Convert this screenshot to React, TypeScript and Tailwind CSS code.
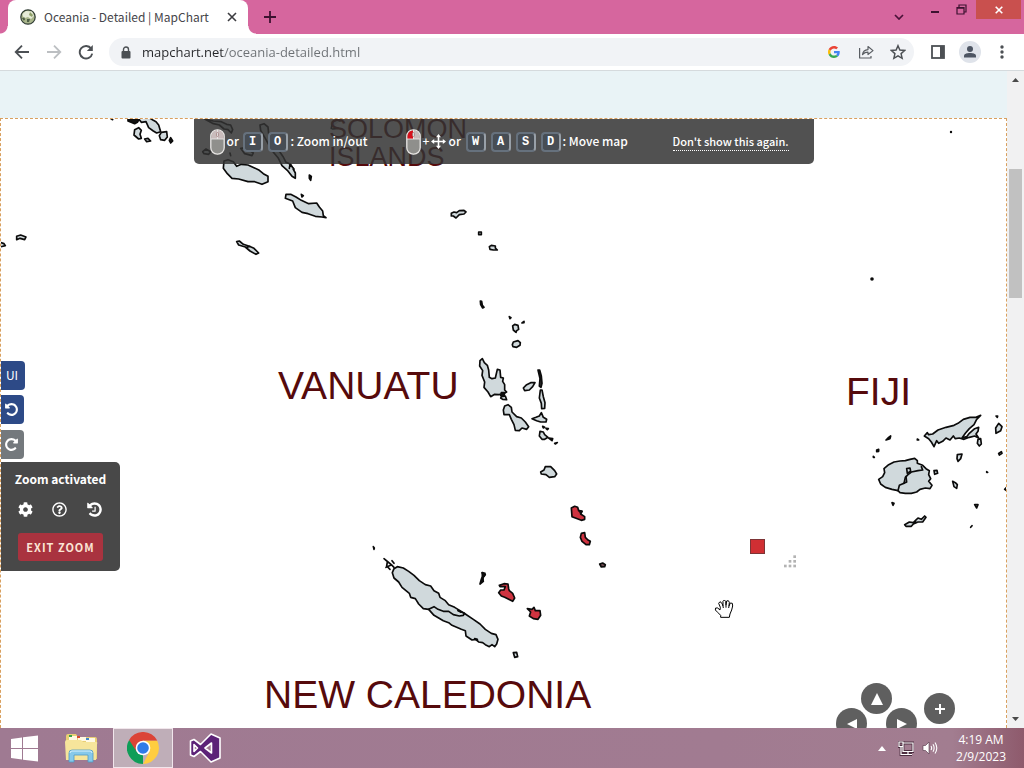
import React from "react";
import { FaCog, FaRegQuestionCircle } from "react-icons/fa";

const LAND = "#d0d9dc";
const RED = "#cf3340";

type Shape = { d: string; fill?: string };

/* Each region lists its outlines on a local grid of three units per map pixel. */
type Region = { x: number; y: number; shapes: Shape[] };

const REGIONS: Region[] = [
  {
    x: 0,
    y: 115,
    shapes: [
      { d: "M384 12 L384 18 L404 26 L412 22 L418 12 L410 10 Z", fill: "#111" },
      { d: "M418 14 L424 22 L438 20 L446 38 L460 48 L470 54 L482 50 L476 30 L468 20 L460 16 L450 10" },
      { d: "M404 44 L416 38 L424 46 L420 58 L424 70 L416 72 L402 60 Z" },
      { d: "M484 52 L500 50 L502 66 L494 76 L482 74 L478 62 Z" },
      { d: "M434 72 L444 70 L452 78 L440 80 Z" },
      { d: "M512 68 L518 78 L512 84 L508 76 Z", fill: "#222" },
      { d: "M328 8 L338 14" },
      { d: "M614 12 L640 18 L664 20 L680 28 L692 30 L698 44 L694 54 L684 44 L672 42 L658 30 L640 26 Z" },
      { d: "M780 30 L792 26 L804 36 L806 56 L818 84 L836 106 L850 126 L858 142 L872 148 L886 174 L886 190 L876 184 L862 166 L846 152 L834 128 L814 104 L798 74 L782 46 Z" },
      { d: "M868 160 L870 148 L882 162" },
      { d: "M608 110 L618 102 L632 110 L626 118 L612 116 Z" },
      { d: "M690 114 L692 122 M722 100 L738 98 L760 114 L756 122 L734 116 Z" },
      { d: "M672 138 L684 134 L700 140 L710 154 L724 148 L744 150 L762 158 L778 166 L790 176 L804 184 L804 200 L786 208 L764 200 L744 200 L716 192 L696 190 L682 176 L670 160 Z" },
      { d: "M928 180 L934 184 L932 196 L928 190 Z", fill: "#111" },
      { d: "M904 238 L910 242 L906 246 Z", fill: "#111" },
      { d: "M858 238 L872 238 L888 246 L904 256 L926 266 L950 264 L958 276 L968 288 L970 302 L978 308 L966 306 L946 304 L924 296 L906 292 L886 278 L878 258 L856 250 Z" },
      { d: "M710 380 L718 378 L730 388 L748 394 L762 400 L776 414 L768 418 L750 408 L736 396 L716 390 Z M738 398 L750 394" },
      { d: "M50 364 L62 360 L78 366 L74 374 L60 370 L50 374 Z" },
      { d: "M0 382 L12 386 L16 392 L0 396" },
      { d: "M994 40 L998 20 L1010 14 L1020 18 M998 42 L1014 40" },
    ],
  },
  {
    x: 440,
    y: 200,
    shapes: [
      { d: "M34 40 L42 36 L50 38 L58 32 L72 31 L78 36 L72 42 L58 44 L48 54 L40 48 L34 48 Z" },
      { d: "M116 96 L124 96 L124 104 L116 104 Z" },
      { d: "M148 140 L154 136 L166 138 L166 144 L172 150 L160 150 L150 148 Z" },
      { d: "M121 303 L125 304 L127 316 L132 322 L128 324 L122 314 Z", fill: "#111" },
      { d: "M208 350 L213 353 L210 356 Z M246 369 L252 364 L252 368 Z", fill: "#111" },
      { d: "M218 378 L224 373 L234 376 L236 388 L230 392 L228 397 L220 390 Z" },
      { d: "M220 426 L234 422 L241 428 L240 436 L230 442 L219 440 L217 434 Z" },
    ],
  },
  {
    x: 440,
    y: 350,
    shapes: [
      { d: "M120 32 L127 26 L133 38 L142 46 L146 60 L148 82 L156 86 L166 84 L172 58 L180 60 L182 82 L190 84 L188 94 L194 104 L194 120 L200 126 L188 132 L176 134 L164 133 L152 140 L144 126 L132 112 L134 96 L126 76 L128 62 L119 48 Z" },
      { d: "M184 128 L194 128 L192 138 L182 136 Z", fill: "#111" },
      { d: "M184 140 L196 138 L200 149 L188 148 L182 144 Z" },
      { d: "M250 114 L260 104 L272 98 L285 98 L278 110 L268 120 L254 122 Z" },
      { d: "M294 60 L299 60 L304 78 L306 100 L303 112 L298 108 L300 86 Z", fill: "#333" },
      { d: "M301 120 L306 120 L310 140 L315 158 L314 175 L305 176 L304 160 L298 144 Z" },
      { d: "M194 168 L204 164 L214 172 L216 186 L230 200 L244 204 L256 216 L266 230 L260 238 L246 234 L238 242 L226 241 L222 224 L214 208 L208 194 L192 194 L190 180 Z" },
      { d: "M276 206 L288 202 L298 198 L304 188 L310 202 L320 208 L318 216 L302 216 L290 212 Z" },
      { d: "M308 229 L314 232 L310 234 Z M318 235 L325 236 L322 239 Z", fill: "#111" },
      { d: "M300 244 L310 246 L314 254 L324 262 L314 268 L306 268 L298 258 Z" },
      { d: "M326 264 L338 266 L336 272 Z M344 280 L352 278 L346 282 Z", fill: "#111" },
      { d: "M302 366 L312 360 L316 350 L332 350 L344 362 L350 372 L344 380 L328 382 L318 374 L304 372 Z" },
      { d: "M394 474 L404 469 L413 472 L416 482 L426 484 L422 492 L434 500 L434 508 L424 511 L406 504 L396 500 Z", fill: RED },
      { d: "M418 482 L426 484 L422 490 Z", fill: "#222" },
      { d: "M424 550 L434 548 L436 562 L444 570 L451 574 L448 584 L438 584 L426 574 L421 562 Z", fill: RED },
      { d: "M479 642 L488 639 L496 644 L494 650 L484 651 Z", fill: "#69484f" },
      { d: "M126 668 L130 676 L136 674 L130 680 L128 690" },
    ],
  },
  {
    x: 850,
    y: 360,
    shapes: [
      { d: "M223 228 L232 218 L236 224 L248 222 L264 210 L288 202 L312 196 L324 190 L340 178 L360 172 L378 172 L392 166 L380 178 L372 194 L358 206 L346 220 L336 234 L350 230 L358 220 L374 206 L386 202 L384 214 L378 222 L386 234 L374 228 L358 232 L342 238 L328 234 L316 236 L310 228 L300 240 L288 234 L278 244 L266 250 L260 242 L252 260 L244 246 L236 236 Z" },
      { d: "M384 238 L392 236 L394 252 L388 258 L382 250 Z" },
      { d: "M438 168 L443 168 L442 172 Z M446 190 L456 200 L452 212 L438 220 L437 204 Z" },
      { d: "M108 240 L114 234 L122 228 L120 236 Z M202 237 L206 240 L202 240 Z M80 270 L86 268 L86 274 L80 275 Z M70 289 L73 292 L70 292 Z", fill: "#222" },
      { d: "M322 284 L336 282 L332 296 L324 304 L321 296 Z" },
      { d: "M446 280 L454 275 L456 280 L448 285 Z M410 335 L413 337 L410 337 Z M470 382 L464 388 L470 392" },
      { d: "M102 326 L116 314 L132 306 L150 303 L166 302 L180 298 L194 295 L202 302 L202 310 L218 316 L228 326 L238 332 L236 344 L242 356 L236 364 L246 376 L240 386 L226 384 L210 388 L200 396 L184 400 L166 400 L150 398 L144 392 L126 388 L106 382 L92 372 L86 358 L98 350 L104 338 Z" },
      { d: "M144 392 L148 376 L162 370 L166 352 L174 344 L184 336 L204 332 L218 330 L214 320", fill: "none" },
      { d: "M170 326 L180 324 L182 334 L172 340 Z M162 370 L170 366 L168 350", fill: "none" },
      { d: "M252 332 L261 331 L263 340 L254 343 Z" },
      { d: "M308 364 L316 368 L322 374 L320 385 L312 380 Z" },
      { d: "M126 428 L132 430 L129 436 Z M374 434 L384 434 L380 444 Z M362 502 L366 497" },
      { d: "M164 494 L178 486 L190 488 L196 482 L204 474 L214 478 L224 468 L228 472 L218 486 L204 486 L190 492 L184 499 L168 499 Z M190 488 L206 486" },
    ],
  },
  {
    x: 360,
    y: 540,
    shapes: [
      { d: "M40 20 L43 24 L42 28 Z", fill: "#111" },
      { d: "M72 56 L84 66 L94 74 L102 82 M82 66 L80 78 L90 88 M78 82 L92 76 M96 62 L102 70", fill: "none" },
      { d: "M102 86 L112 80 L130 84 L146 94 L162 106 L178 122 L196 134 L212 138 L222 152 L236 160 L240 172 L256 182 L266 194 L284 202 L300 212 L316 222 L340 238 L360 252 L376 268 L394 280 L408 284 L414 298 L410 312 L404 320 L396 314 L388 320 L376 314 L368 308 L356 306 L348 298 L336 300 L318 288 L316 272 L304 268 L290 262 L276 256 L266 248 L250 242 L236 234 L222 226 L206 208 L190 206 L176 192 L166 176 L152 172 L148 160 L126 142 L116 126 L102 114 L97 98 Z" },
      { d: "M206 208 L222 200 L234 208 L250 214 L266 214 L280 224 L298 228 L310 226 L314 220 L294 212", fill: "none" },
      { d: "M294 210 L302 216 M344 296 L352 302 L352 298 Z", fill: "#111" },
      { d: "M367 98 L375 100 L373 108 L368 114 L370 124 L360 132 L364 118 L367 110 Z", fill: "#111" },
      { d: "M418 136 L432 131 L444 132 L446 146 L448 152 L458 160 L464 174 L458 184 L446 178 L434 172 L424 168 L416 158 L422 150 L432 150 L436 140 L420 140 Z", fill: RED },
      { d: "M502 206 L516 208 L522 202 L526 212 L540 212 L542 226 L534 238 L520 236 L508 228 L512 216 Z", fill: RED },
      { d: "M460 338 L470 337 L473 350 L464 352 Z" },
    ],
  },
];

const DOTS = [[284, 80], [270, 94], [284, 94], [256, 108], [270, 108], [284, 108]];

const TURN_ARROW =
  "M1664 896q0 156-61 298t-164 245-245 164-298 61q-172 0-327-72.5t-264-204.5q-7-10-6.5-22.5t8.5-20.5l137-138q10-9 25-9 16 2 23 12 73 95 179 147t225 52q104 0 198.5-40.5t163.5-109.5 109.5-163.5 40.5-198.5-40.5-198.5-109.5-163.5-163.5-109.5-198.5-40.5q-98 0-188 35.5t-160 101.5l137 138q31 30 14 69-17 40-59 40h-448q-26 0-45-19t-19-45v-448q0-42 40-59 39-17 69 14l130 129q107-101 244.5-156.5t284.5-55.5q156 0 298 61t245 164 164 245 61 298z";
const CLOCK_HANDS =
  "M1024 640v448q0 14-9 23t-23 9h-320q-14 0-23-9t-9-23v-64q0-14 9-23t23-9h224v-352q0-14 9-23t23-9h64q14 0 23 9t9 23z";

function OceaniaMap() {
  return (
    <svg
      className="absolute inset-0 h-full w-full"
      viewBox="1 119 1005 609"
      preserveAspectRatio="xMidYMid slice"
      role="img"
      aria-label="Map of Oceania"
    >
      {REGIONS.map((r, i) => (
        <g
          key={i}
          transform={`translate(${r.x} ${r.y}) scale(0.33333)`}
          stroke="#0b0b0b"
          strokeWidth="5"
          strokeLinejoin="round"
          strokeLinecap="round"
        >
          {r.shapes.map((s, j) => (
            <path key={j} d={s.d} fill={s.fill ?? LAND} />
          ))}
        </g>
      ))}
      <g fill="#0b0b0b">
        <circle cx="872" cy="279" r="1.8" />
        <circle cx="951" cy="132" r="1.2" />
      </g>
      <g fill="#560a0c" fontFamily="'Liberation Sans', Arial, sans-serif">
        <text x="278" y="399" fontSize="39">VANUATU</text>
        <text x="846" y="405" fontSize="39">FIJI</text>
        <text x="264" y="708" fontSize="39">NEW CALEDONIA</text>
        <text x="329" y="138" fontSize="27">SOLOMON</text>
        <text x="329" y="166" fontSize="27">ISLANDS</text>
      </g>
      <rect x="750.5" y="539.5" width="14" height="14" fill="#d02f33" stroke="#7d3436" />
      <g transform="translate(700 530) scale(0.33333)">
        {DOTS.map(([x, y]) => (
          <rect key={`${x}-${y}`} x={x - 4} y={y - 4} width="8" height="8" fill="#b3b3b3" />
        ))}
        <path
          d="M62 262 L62 256 L54 248 L46 240 L47 234 L53 234 L60 240 L61 232 L56 220 L60 215 L66 220 L69 228 L69 214 L73 210 L77 214 L78 226 L80 213 L85 212 L88 217 L87 228 L91 219 L97 220 L98 228 L95 240 L90 252 L88 262 Z M69 228 L70 234 M78 226 L78 233 M87 228 L86 234"
          fill="#fff"
          stroke="#000"
          strokeWidth="3"
          strokeLinejoin="round"
        />
      </g>
    </svg>
  );
}

function MouseIcon({ left = false }: { left?: boolean }) {
  return (
    <svg viewBox="0 0 15 26" className="h-[26px] w-[15px] shrink-0" aria-hidden="true">
      <rect x="0.8" y="0.8" width="13.4" height="24.4" rx="6.5" fill="#8f8f8c" stroke="#e8e6e4" strokeWidth="1.3" />
      <path d="M1.5 10 V7 A6 6 0 0 1 13.5 7 V10 Z" fill="#c9bcbc" />
      {left && <path d="M1.5 10 V7 A6 6 0 0 1 7 1.4 V10 Z" fill="#d6101c" />}
      <path d="M1 10 H14 M7.5 1 V4 M7.5 7 V10" stroke="#eee" strokeWidth="0.8" />
      <rect x="6.5" y="3.5" width="2" height="4" rx="1" fill="#ddd" stroke="#9a6d6d" strokeWidth="0.6" />
    </svg>
  );
}

function MoveIcon() {
  return (
    <svg viewBox="0 0 15 15" className="ml-px h-[15px] w-[15px] shrink-0" aria-hidden="true">
      <path d="M7.5 2 V13 M2 7.5 H13" stroke="#fff" strokeWidth="1.6" />
      <path d="M7.5 0 L10 3.2 H5 Z M7.5 15 L5 11.8 H10 Z M0 7.5 L3.2 5 V10 Z M15 7.5 L11.8 10 V5 Z" fill="#fff" />
    </svg>
  );
}

function TurnIcon({ flip = false, clock = false, large = false }: { flip?: boolean; clock?: boolean; large?: boolean }) {
  return (
    <svg viewBox="0 0 1792 1792" className={large ? "h-[17px] w-[17px]" : "h-[15px] w-[15px]"} fill="currentColor" aria-hidden="true">
      <g transform={flip ? "translate(1792 0) scale(-1 1)" : undefined}>
        <path d={TURN_ARROW} />
        {clock && <path d={CLOCK_HANDS} />}
      </g>
    </svg>
  );
}

function Key({ children }: { children: string }) {
  return (
    <kbd className="flex h-5 w-5 items-center justify-center rounded-[4px] border-2 border-[#66717d] border-r-[#98a0a8] bg-[#474d54] font-['Liberation_Mono',monospace] text-[12px] font-bold leading-none text-white">
      {children}
    </kbd>
  );
}

function HelpBar() {
  return (
    <div className="flex h-[45px] w-[620px] items-center rounded-b-[5px] bg-[#333]/85 pl-4 text-[12px] leading-5 font-medium text-white">
      <MouseIcon />
      <span className="ml-[2px] w-4 pb-[2px]">or</span>
      <span className="flex items-center gap-[5px]"><Key>I</Key><Key>O</Key></span>
      <span className="ml-[3px] w-[115px] pb-[2px] whitespace-nowrap">: Zoom in/out</span>
      <MouseIcon left />
      <span className="ml-[2px] w-[7px] pb-[2px]">+</span>
      <MoveIcon />
      <span className="ml-[3px] w-[17px] pb-[2px]">or</span>
      <span className="flex items-center gap-[5px]"><Key>W</Key><Key>A</Key><Key>S</Key><Key>D</Key></span>
      <span className="ml-[2px] w-[110px] pb-[2px] whitespace-nowrap">: Move map</span>
      <button className="border-b border-dotted border-white text-[11px] leading-[18px] whitespace-nowrap">Don't show this again.</button>
    </div>
  );
}

function SidePanel() {
  return (
    <div className="absolute left-0 top-[242px] flex flex-col items-start text-white">
      <button className="mb-[5px] flex h-[29px] w-6 items-center justify-center rounded-r-[4px] bg-[#2d4a87] pb-[2px] pr-[2px] text-[12px] leading-none">UI</button>
      <button aria-label="Undo" className="mb-[6px] flex h-[29px] w-[23px] items-center justify-center rounded-r-[4px] bg-[#2d4a87] pr-[2px]"><TurnIcon /></button>
      <button aria-label="Redo" className="mb-[3px] flex h-[29px] w-[23px] items-center justify-center rounded-r-[4px] bg-[#74797d] pr-[2px]"><TurnIcon flip /></button>
      <section className="flex h-[109px] w-[119px] flex-col items-center rounded-r-[5px] bg-[#484848] pt-[7px]">
        <h2 className="text-[12px] leading-5 font-bold">Zoom activated</h2>
        <div className="mt-3 flex items-center gap-[19px]">
          <button aria-label="Settings"><FaCog className="h-[15px] w-[15px]" /></button>
          <button aria-label="Help"><FaRegQuestionCircle className="h-[15px] w-[15px]" /></button>
          <button aria-label="Reset zoom"><TurnIcon clock large /></button>
        </div>
        <button className="mt-[15px] h-7 w-[85px] rounded-[3px] bg-[#a9333f] text-[11px] leading-none font-bold tracking-[1px] text-[#fbe5d5]">EXIT ZOOM</button>
      </section>
    </div>
  );
}

function NavButtons() {
  const base = "absolute flex h-[31px] w-[31px] items-center justify-center rounded-full bg-[#5f5f5f]";
  return (
    <div className="absolute -bottom-[11px] right-[50px] h-14 w-[120px]">
      <button aria-label="Move up" className={`${base} left-[25px] top-0`}>
        <svg viewBox="0 0 14 14" className="h-3.5 w-3.5"><path d="M7 1 L13 13 H1 Z" fill="#fff" /></svg>
      </button>
      <button aria-label="Move left" className={`${base} left-0 top-[25px]`}>
        <svg viewBox="0 0 12 12" className="h-3 w-3"><path d="M1 6 L11 1 V11 Z" fill="#fff" /></svg>
      </button>
      <button aria-label="Move right" className={`${base} left-[50px] top-[25px]`}>
        <svg viewBox="0 0 12 12" className="h-3 w-3"><path d="M11 6 L1 1 V11 Z" fill="#fff" /></svg>
      </button>
      <button aria-label="Zoom in" className={`${base} left-[88px] top-[10px]`}>
        <svg viewBox="0 0 12 12" className="h-3 w-3"><path d="M6 1 V11 M1 6 H11" stroke="#fff" strokeWidth="2" /></svg>
      </button>
    </div>
  );
}

function TabStrip() {
  return (
    <header className="flex h-[34px] shrink-0 bg-[#d6669e] pl-2">
      <div className="relative flex w-60 items-center rounded-t-lg bg-white pl-3">
        <span className="absolute -left-2 bottom-0 h-2 w-2 bg-[radial-gradient(circle_at_0_0,transparent_7px,white_8px)]" />
        <span className="absolute -right-2 bottom-0 h-2 w-2 bg-[radial-gradient(circle_at_100%_0,transparent_7px,white_8px)]" />
        <svg viewBox="0 0 16 16" className="h-4 w-4" aria-hidden="true">
          <circle cx="8" cy="8" r="7.2" fill="#a9b58b" stroke="#2f3b33" strokeWidth="1.2" />
          <path d="M2.5 5 L6 2 L12 2.5 L14 7 L11 10 L8 8 L5 9 L3 7.5 Z" fill="#e6ebd8" />
          <path d="M2 9 L4.5 8.5 L5 11 L3.5 11.5 Z M7 10 L10 10 L9 13 L7 13 Z" fill="#4e5f45" />
          <path d="M10 3 L13 6 L12 8 L9 6 Z" fill="#8fa06a" />
        </svg>
        <span className="ml-2 w-[180px] font-['Noto_Sans_CJK_SC',sans-serif] text-[12px] leading-4 whitespace-nowrap text-[#45454a]">Oceania - Detailed | MapChart</span>
        <button aria-label="Close tab" className="ml-[3px]">
          <svg viewBox="0 0 10 10" className="h-2.5 w-2.5"><path d="M1 1 L9 9 M9 1 L1 9" stroke="#3c3c40" strokeWidth="1.6" /></svg>
        </button>
      </div>
      <button aria-label="New tab" className="ml-4 self-center">
        <svg viewBox="0 0 12 12" className="h-3 w-3"><path d="M6 0 V12 M0 6 H12" stroke="#3d1230" strokeWidth="1.8" /></svg>
      </button>
      <div className="ml-auto flex items-start pr-[3px]">
        <button aria-label="Search tabs" className="mt-[14px] mr-[27px]">
          <svg viewBox="0 0 10 6" className="h-1.5 w-2.5"><path d="M1 1 L5 5 L9 1" fill="none" stroke="#4a1238" strokeWidth="1.7" /></svg>
        </button>
        <button aria-label="Minimize" className="mt-[11px] mr-[17px] h-[2px] w-2 bg-[#3d1230]" />
        <button aria-label="Restore" className="mt-1 mr-[9px]">
          <svg viewBox="0 0 11 11" className="h-[11px] w-[11px]"><path d="M1 3.5 H8 V10 H1 Z M3 3 V1 H10 V8 H8.5 M1 4.2 H8" fill="none" stroke="#3d1230" strokeWidth="1.2" /></svg>
        </button>
        <button aria-label="Close" className="flex h-[19px] w-[45px] items-center justify-center bg-[#c9504e]">
          <svg viewBox="0 0 8 8" className="h-2 w-2"><path d="M0.7 0.7 L7.3 7.3 M7.3 0.7 L0.7 7.3" stroke="#fff" strokeWidth="1.6" /></svg>
        </button>
      </div>
    </header>
  );
}

function Toolbar() {
  return (
    <nav className="flex h-[37px] shrink-0 items-center border-b border-[#d5dadd] bg-white pl-[14px] pr-3">
      <button aria-label="Back">
        <svg viewBox="0 0 16 16" className="h-4 w-4"><path d="M15 8 H2 M8 1.7 L1.7 8 L8 14.3" fill="none" stroke="#4c5054" strokeWidth="1.8" /></svg>
      </button>
      <button aria-label="Forward" className="ml-4">
        <svg viewBox="0 0 16 16" className="h-4 w-4"><path d="M1 8 H14 M8 1.7 L14.3 8 L8 14.3" fill="none" stroke="#bcbfc2" strokeWidth="1.8" /></svg>
      </button>
      <button aria-label="Reload" className="ml-4">
        <svg viewBox="0 0 16 16" className="h-4 w-4"><path d="M13.2 4.6 A6.3 6.3 0 1 0 14.2 9.6" fill="none" stroke="#4c5054" strokeWidth="1.9" /><path d="M14.8 1 V7 H8.8 Z" fill="#4c5054" /></svg>
      </button>
      <div className="ml-[15px] flex h-7 flex-1 items-center rounded-full bg-[#f1f3f6] pl-3 pr-2">
        <svg viewBox="0 0 10 13" className="h-[13px] w-2.5" aria-hidden="true"><rect x="0.5" y="5" width="9" height="7.5" rx="1" fill="#4c5054" /><path d="M2.5 5.5 V3.5 A2.5 2.5 0 0 1 7.5 3.5 V5.5" fill="none" stroke="#4c5054" strokeWidth="1.4" /></svg>
        <input
          aria-label="Address"
          defaultValue="mapchart.net/oceania-detailed.html"
          className="ml-[11px] h-5 min-w-0 flex-1 bg-[linear-gradient(90deg,#242528_82px,#6c7074_82px)] bg-clip-text text-[13px] leading-5 text-transparent outline-none"
        />
        <button aria-label="Google search">
          <svg viewBox="0 0 48 48" className="h-3 w-3">
            <path fill="#EA4335" d="M24 9.5c3.54 0 6.71 1.22 9.21 3.6l6.85-6.85C35.9 2.38 30.47 0 24 0 14.62 0 6.51 5.38 2.56 13.22l7.98 6.19C12.43 13.72 17.74 9.5 24 9.5z" />
            <path fill="#4285F4" d="M46.98 24.55c0-1.57-.15-3.09-.38-4.55H24v9.02h12.94c-.58 2.96-2.26 5.48-4.78 7.18l7.73 6c4.51-4.18 7.09-10.36 7.09-17.65z" />
            <path fill="#FBBC05" d="M10.53 28.59c-.48-1.45-.76-2.99-.76-4.59s.27-3.14.76-4.59l-7.98-6.19C.92 16.46 0 20.12 0 24c0 3.88.92 7.54 2.56 10.78l7.97-6.19z" />
            <path fill="#34A853" d="M24 48c6.48 0 11.93-2.13 15.89-5.81l-7.73-6c-2.15 1.45-4.92 2.3-8.16 2.3-6.26 0-11.57-4.22-13.47-9.91l-7.98 6.19C6.51 42.62 14.62 48 24 48z" />
          </svg>
        </button>
        <button aria-label="Share" className="ml-[18px]">
          <svg viewBox="0 0 16 14" className="h-3.5 w-4"><path d="M1.6 3 V13 H13 V11 M4.5 9.5 C5 6 7.5 4.8 10 4.6 V1.5 L15 5.6 L10 9.5 V7.2 C7.5 7.2 6 8 4.5 9.5 Z" fill="none" stroke="#5a5e63" strokeWidth="1.2" strokeLinejoin="round" /></svg>
        </button>
        <button aria-label="Bookmark" className="ml-4">
          <svg viewBox="0 0 24 24" className="h-4 w-4"><path d="M12 2.5 L14.8 9 L22 9.7 L16.6 14.4 L18.2 21.4 L12 17.7 L5.8 21.4 L7.4 14.4 L2 9.7 L9.2 9 Z" fill="none" stroke="#4c5054" strokeWidth="2.2" /></svg>
        </button>
      </div>
      <button aria-label="Side panel" className="ml-[17px]">
        <svg viewBox="0 0 14 14" className="h-3.5 w-3.5"><rect x="1" y="1" width="12" height="12" fill="#fff" stroke="#4c5054" strokeWidth="1.8" /><path d="M9 1 H13 V13 H9 Z" fill="#4c5054" /></svg>
      </button>
      <button aria-label="Profile" className="ml-[14px]">
        <svg viewBox="0 0 22 22" className="h-[22px] w-[22px]"><circle cx="11" cy="11" r="11" fill="#dfe3ea" /><circle cx="11" cy="8" r="3" fill="#4d5563" /><path d="M5 16.5 V15 C5 12.7 8 12 11 12 S17 12.7 17 15 V16.5 Z" fill="#4d5563" /></svg>
      </button>
      <button aria-label="Menu" className="ml-[13px] mr-[2px]">
        <svg viewBox="0 0 16 16" className="h-4 w-4"><g fill="#4c5054"><circle cx="8" cy="3" r="1.7" /><circle cx="8" cy="8" r="1.7" /><circle cx="8" cy="13" r="1.7" /></g></svg>
      </button>
    </nav>
  );
}

function PageScrollbar() {
  return (
    <div className="flex w-[17px] shrink-0 flex-col items-center bg-[#f1f1f2]">
      <svg viewBox="0 0 17 17" className="h-[17px] w-[17px]" aria-hidden="true"><path d="M5 11 L8.5 7 L12 11 Z" fill="#4a4a4a" /></svg>
      <div className="mt-[81px] h-[129px] w-[13px] bg-[#c1c1c1]" />
      <svg viewBox="0 0 17 17" className="mt-auto h-[17px] w-[17px]" aria-hidden="true"><path d="M5 6 L8.5 10 L12 6 Z" fill="#4a4a4a" /></svg>
    </div>
  );
}

function Taskbar() {
  return (
    <footer className="flex h-10 shrink-0 items-stretch bg-[linear-gradient(90deg,#9f7a92,#a17b91_70%,#a27d90_93%,#8e5a6c)] text-white">
      <button aria-label="Start" className="flex w-12 items-center justify-center">
        <svg viewBox="0 0 28 27" className="h-[27px] w-7"><path d="M1 4 L12 2.5 V13 H1 Z M13 2.3 L28 0.5 V13 H13 Z M1 14 H12 V24.5 L1 23 Z M13 14 H28 V26.5 L13 24.7 Z" fill="#fff" /></svg>
      </button>
      <button aria-label="File Explorer" className="flex w-[65px] items-center justify-center">
        <svg viewBox="0 0 34 30" className="h-[30px] w-[34px]">
          <path d="M2 3 Q2 1 4 1 H12 L14 4 H31 Q33 4 33 6 V26 H2 Z" fill="#e9cf74" />
          <path d="M5 3 H13 V7 H5 Z M14 4 H22 V8 H14 Z M22 5 H31 V9 H22 Z" fill="#fff9e4" />
          <path d="M5 2 H8 V4 H5 Z" fill="#3ba24b" /><path d="M13 3 H16 V5 H13 Z" fill="#d84a30" /><path d="M22 5 H25 V7 H22 Z" fill="#3f87c9" />
          <path d="M1 9 Q1 7 3 7 H17 L19 9 H32 Q34 9 33 11 L32 27 H2 Z" fill="#f6e59b" />
          <path d="M5 29 V20 Q5 17 8 17 H26 Q29 17 29 20 V29 H24 V22 H10 V29 Z" fill="#86c9ea" stroke="#4f9bc5" strokeWidth="0.8" />
          <path d="M6 20 Q6 18 8 18 H26 Q28 18 28 20" fill="none" stroke="#d9f2fc" />
        </svg>
      </button>
      <button aria-label="Google Chrome" className="flex w-[60px] items-center justify-center border border-[#f1e6ec] bg-[#bfaeb8]">
        <svg viewBox="0 0 48 48" className="h-8 w-8">
          <path d="M24 24 L24 48 A24 24 0 0 1 3.2 12 Z" fill="#0f9d58" />
          <path d="M24 13 H45.3 L44.8 12 A24 24 0 0 0 3.2 12 L14.5 29.5 Z" fill="#db4437" />
          <path d="M33.5 29.5 L24 48 A24 24 0 0 0 45.3 13 H24 Z" fill="#ffcd40" />
          <circle cx="24" cy="24" r="11" fill="#fff" /><circle cx="24" cy="24" r="8.7" fill="#2f7be8" />
        </svg>
      </button>
      <button aria-label="Visual Studio" className="flex w-[63px] items-center justify-center">
        <svg viewBox="0 0 32 32" className="h-8 w-8">
          <path fillRule="evenodd" d="M22 2 L31 6 V26 L22 30 L11.5 19.5 L5 24.5 L1.5 23 V9 L5 7.5 L11.5 12.5 Z M22.5 11 L16 16 L22.5 21 Z M5 12.5 V19.5 L8.5 16 Z" fill="#5c2277" stroke="#fff" strokeWidth="1.6" strokeLinejoin="round" />
        </svg>
      </button>
      <div className="ml-auto flex items-center pr-[18px]">
        <button aria-label="Show hidden icons"><svg viewBox="0 0 8 5" className="h-[5px] w-2"><path d="M0 5 L4 0 L8 5 Z" fill="#fff" /></svg></button>
        <button aria-label="Network" className="ml-3">
          <svg viewBox="0 0 16 15" className="h-[15px] w-4"><path d="M5 2 H15 V10.5 H5 Z M10 10.5 V13 M6 13.5 H14 M3 6 V13.5 H6 M1 1 H5 V5.5 H1 Z" fill="none" stroke="#4d2f41" strokeWidth="2.8" /><path d="M5 2 H15 V10.5 H5 Z M10 10.5 V13 M6 13.5 H14 M3 6 V13.5 H6 M1 1 H5 V5.5 H1 Z" fill="none" stroke="#fff" strokeWidth="1.2" /></svg>
        </button>
        <button aria-label="Volume" className="ml-2">
          <svg viewBox="0 0 16 14" className="h-3.5 w-4"><path d="M1 4.5 H3.5 L7 1 V13 L3.5 9.5 H1 Z" fill="#fff" stroke="#4d2f41" strokeWidth="0.6" /><path d="M9 5 Q10.3 7 9 9 M11 3.2 Q13.3 7 11 10.8 M13 1.5 Q16.6 7 13 12.5" fill="none" stroke="#fff" strokeWidth="1.1" /></svg>
        </button>
        <time className="ml-[18px] text-center text-[12px] leading-[17px]">4:19 AM<br />2/9/2023</time>
      </div>
    </footer>
  );
}

export default function App() {
  return (
    <div className="flex h-screen flex-col overflow-hidden bg-white font-['Segoe_UI','Open_Sans',sans-serif]">
      <TabStrip />
      <Toolbar />
      <div className="flex min-h-0 flex-1">
        <main className="flex min-w-0 flex-1 flex-col bg-[#e9f3f6] pt-[47px] font-['Source_Sans_Pro','Noto_Sans_CJK_SC',sans-serif]">
          <div className="relative flex-1 overflow-hidden border border-b-0 border-dashed border-[#d9a05f] bg-white">
            <OceaniaMap />
            <div className="relative flex justify-center">
              <HelpBar />
            </div>
            <SidePanel />
            <NavButtons />
          </div>
        </main>
        <PageScrollbar />
      </div>
      <Taskbar />
    </div>
  );
}
